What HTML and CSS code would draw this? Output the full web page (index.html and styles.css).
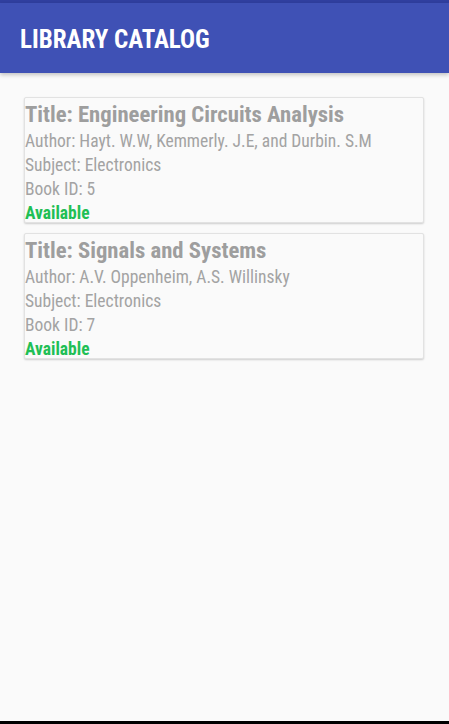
FILE: index.html
```html
<!DOCTYPE html>
<html>
<head>
<meta charset="utf-8">
<title>Library Catalog</title>
<link rel="stylesheet" href="styles.css">
</head>
<body>
<div class="app">
  <div class="status-bar"></div>
  <header class="toolbar">
    <h1 class="toolbar-title">LIBRARY CATALOG</h1>
  </header>
  <main class="list">
    <div class="card">
      <div class="book-title">Title: Engineering Circuits Analysis</div>
      <div class="book-line">Author: Hayt. W.W, Kemmerly. J.E, and Durbin. S.M</div>
      <div class="book-line">Subject: Electronics</div>
      <div class="book-line">Book ID: 5</div>
      <div class="book-status">Available</div>
    </div>
    <div class="card">
      <div class="book-title">Title: Signals and Systems</div>
      <div class="book-line">Author: A.V. Oppenheim, A.S. Willinsky</div>
      <div class="book-line">Subject: Electronics</div>
      <div class="book-line">Book ID: 7</div>
      <div class="book-status">Available</div>
    </div>
  </main>
  <div class="nav-bar"></div>
</div>
</body>
</html>
```
FILE: styles.css
```css
html, body {
  margin: 0;
  padding: 0;
  height: 100%;
}
body {
  background: #fafafa;
  font-family: "Roboto Condensed", Roboto, "Liberation Sans", sans-serif;
  font-stretch: condensed;
}
.app {
  display: flex;
  flex-direction: column;
  height: 724px;
}
.status-bar {
  height: 3px;
  background: #303f9f;
  flex: none;
}
.toolbar {
  height: 70px;
  background: #3f51b5;
  flex: none;
  display: flex;
  align-items: center;
  padding-left: 20px;
  box-shadow: 0 2px 4px rgba(0,0,0,0.22);
  position: relative;
  z-index: 1;
}
.toolbar-title {
  margin: 0;
  color: #ffffff;
  font-size: 25px;
  font-weight: 700;
  letter-spacing: 0;
  padding-top: 2px;
}
.list {
  flex: 1;
  padding: 24px 25px 0 24px;
  display: flex;
  flex-direction: column;
  gap: 10px;
}
.card {
  background: #fafafa;
  border: 1px solid #e2e2e2;
  border-radius: 2px;
  box-shadow: 0 1px 2px rgba(0,0,0,0.18);
  padding: 2px 0 0 0;
  display: flex;
  flex-direction: column;
}
.book-title {
  color: #9e9e9e;
  font-size: 22.7px;
  font-weight: 700;
  line-height: 29px;
}
.book-line {
  color: #a3a3a3;
  font-size: 17.5px;
  line-height: 24px;
}
.book-status {
  color: #1fbf55;
  font-size: 17.5px;
  font-weight: 700;
  line-height: 18px;
  padding-top: 3px;
}
.nav-bar {
  height: 3px;
  background: #000;
  flex: none;
}
```
